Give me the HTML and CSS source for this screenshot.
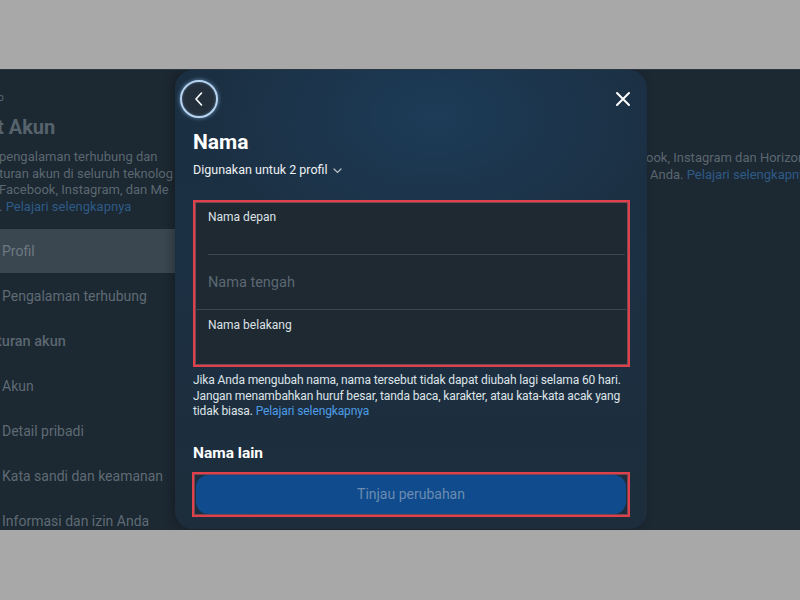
FILE: index.html
```html
<!DOCTYPE html>
<html lang="id">
<head>
<meta charset="utf-8">
<title>Nama</title>
<link rel="stylesheet" href="styles.css">
</head>
<body>
<div class="screen">
  <div class="backdrop">
    <div class="sidebar">
      <div class="logo">o</div>
      <div class="page-title">t Akun</div>
      <div class="page-desc">pengalaman terhubung dan<br>turan akun di seluruh teknolog<br>Facebook, Instagram, dan Me<br>. <span class="dim-link">Pelajari selengkapnya</span></div>
      <div class="nav">
        <div class="nav-item selected">Profil</div>
        <div class="nav-item">Pengalaman terhubung</div>
        <div class="nav-item section">turan akun</div>
        <div class="nav-item">Akun</div>
        <div class="nav-item">Detail pribadi</div>
        <div class="nav-item">Kata sandi dan keamanan</div>
        <div class="nav-item">Informasi dan izin Anda</div>
      </div>
    </div>
    <div class="main-bg"></div>
    <div class="right-bg">
      <div class="right-desc">ook, Instagram dan Horizon<br><span class="indent">Anda. <span class="dim-link">Pelajari selengkapnya</span></span></div>
    </div>
  </div>

  <div class="modal">
    <div class="modal-top">
      <div class="back-btn">
        <svg width="12" height="16" viewBox="0 0 12 16"><path d="M8.5 2 L3 8 L8.5 14" fill="none" stroke="#fff" stroke-width="1.6" stroke-linecap="round" stroke-linejoin="round"/></svg>
      </div>
      <div class="close-btn">
        <svg width="16" height="16" viewBox="0 0 16 16"><path d="M2 2 L14 14 M14 2 L2 14" fill="none" stroke="#fff" stroke-width="2" stroke-linecap="round"/></svg>
      </div>
    </div>
    <div class="modal-body">
      <h1 class="title">Nama</h1>
      <div class="used-for">Digunakan untuk 2 profil
        <svg class="chev" width="9" height="6" viewBox="0 0 9 6"><path d="M1 1 L4.5 4.5 L8 1" fill="none" stroke="#b9c2c9" stroke-width="1.2" stroke-linecap="round"/></svg>
      </div>
      <div class="fields">
        <div class="field first"><span class="label">Nama depan</span></div>
        <div class="field middle"><span class="placeholder">Nama tengah</span></div>
        <div class="field last"><span class="label">Nama belakang</span></div>
      </div>
      <p class="help">Jika Anda mengubah nama, nama tersebut tidak dapat diubah lagi selama 60 hari. Jangan menambahkan huruf besar, tanda baca, karakter, atau kata-kata acak yang tidak biasa. <span class="link">Pelajari selengkapnya</span></p>
      <h2 class="subtitle">Nama lain</h2>
      <div class="btn-outline">
        <div class="btn">Tinjau perubahan</div>
      </div>
    </div>
  </div>
</div>
</body>
</html>
```
FILE: styles.css
```css
* { box-sizing: border-box; }
html, body { margin: 0; padding: 0; }
body {
  background: #a8a8a8;
  width: 800px;
  height: 600px;
  overflow: hidden;
  font-family: Roboto, "Noto Sans", sans-serif;
}
.screen {
  margin-top: 69px;
  height: 461px;
  background: #1c2832;
  position: relative;
  overflow: hidden;
  border-top: 1px solid #2a3640;
}
.backdrop {
  display: flex;
  height: 100%;
}
.sidebar {
  width: 175px;
  flex: none;
  overflow: hidden;
  white-space: nowrap;
  color: #5c6871;
}
.logo {
  font-size: 10px;
  margin-top: 22px;
  height: 14px;
  margin-left: -2px;
}
.page-title {
  font-size: 20px;
  font-weight: 700;
  margin-top: 9px;
  margin-left: -3px;
  height: 26px;
  color: #56636c;
}
.page-desc {
  font-size: 13px;
  line-height: 16.5px;
  margin-top: 8px;
  margin-left: -1px;
  color: #5b6770;
}
.dim-link { color: #2e5b86; }
.nav { margin-top: 14px; }
.nav-item {
  height: 45px;
  line-height: 45px;
  font-size: 14px;
  padding-left: 2px;
  color: #5f6b74;
}
.nav-item.selected {
  background: #3a4650;
  height: 44px;
  line-height: 44px;
  margin-bottom: 1px;
  color: #6e7a83;
}
.nav-item.section {
  font-weight: 500;
  padding-left: 0;
  margin-left: -3px;
  color: #5b6770;
  font-size: 14.5px;
}
.main-bg { flex: 1; }
.right-bg {
  width: 153px;
  flex: none;
  overflow: hidden;
  white-space: nowrap;
  padding-top: 80px;
}
.right-desc {
  font-size: 13px;
  line-height: 16.5px;
  color: #5b6770;
  margin-left: -1px;
}
.indent { margin-left: 4px; }

.modal {
  position: absolute;
  left: 175px;
  top: 0;
  width: 472px;
  height: 459px;
  border-radius: 18px;
  background:
    radial-gradient(ellipse 70% 45% at 55% 10%, rgba(30, 70, 105, 0.55), rgba(30,70,105,0) 70%),
    linear-gradient(180deg, #1b2f42 0%, #1c3043 45%, #1d2d3b 100%);
  box-shadow: -3px 0 10px rgba(0,0,0,0.25);
  color: #fff;
}
.modal-top {
  display: flex;
  justify-content: space-between;
  align-items: center;
  padding: 10px 14px 0 5px;
  height: 48px;
}
.back-btn {
  width: 38px;
  height: 38px;
  border-radius: 50%;
  border: 2px solid #b7d3ef;
  box-shadow: 0 0 4px rgba(140, 190, 240, 0.7), inset 0 0 3px rgba(140,190,240,0.4);
  background: #232f3b;
  display: flex;
  align-items: center;
  justify-content: center;
}
.back-btn svg { margin-left: -1px; }
.close-btn {
  width: 20px;
  height: 20px;
  display: flex;
  align-items: center;
  justify-content: center;
}
.modal-body {
  padding: 0 17px 0 18px;
}
.title {
  margin: 11px 0 0;
  font-size: 21px;
  line-height: 26px;
  font-weight: 700;
}
.used-for {
  margin-top: 7px;
  font-size: 12.5px;
  line-height: 16px;
  color: #eef1f3;
  display: flex;
  align-items: center;
  gap: 5px;
}
.chev { margin-top: 1px; }
.fields {
  margin-top: 22px;
  border: 2px solid #e0404c;
  box-shadow: inset 0 0 0 1px rgba(240, 110, 120, 0.45);
  background: #1e2932;
}
.field {
  position: relative;
  padding-left: 13px;
}
.field.first { height: 53px; }
.field.first::after {
  content: "";
  position: absolute;
  left: 13px;
  right: 3px;
  bottom: 0;
  height: 1px;
  background: #3a4651;
}
.field.middle {
  height: 55px;
  border-bottom: 1px solid #3a4651;
  display: flex;
  align-items: center;
}
.field.last { height: 55px; }
.label {
  display: block;
  font-size: 12px;
  line-height: 14px;
  padding-top: 8px;
  color: #dde2e6;
}
.placeholder {
  font-size: 14.5px;
  color: #5b6872;
  margin-top: 1px;
}
.help {
  margin: 6px 0 0;
  font-size: 12px;
  line-height: 15.5px;
  letter-spacing: -0.12px;
  color: #dfe4e8;
}
.link { color: #4d9de6; }
.subtitle {
  margin: 23px 0 0;
  font-size: 15.5px;
  line-height: 20px;
  font-weight: 700;
}
.btn-outline {
  margin-top: 9px;
  margin-left: -1px;
  border: 2px solid #e0404c;
  box-shadow: inset 0 0 0 1px rgba(240, 110, 120, 0.4);
  padding: 1px 2px;
}
.btn {
  height: 39px;
  border-radius: 12px;
  background: #0f4b8d;
  color: #6b8cb0;
  font-size: 14px;
  display: flex;
  align-items: center;
  justify-content: center;
}
```
